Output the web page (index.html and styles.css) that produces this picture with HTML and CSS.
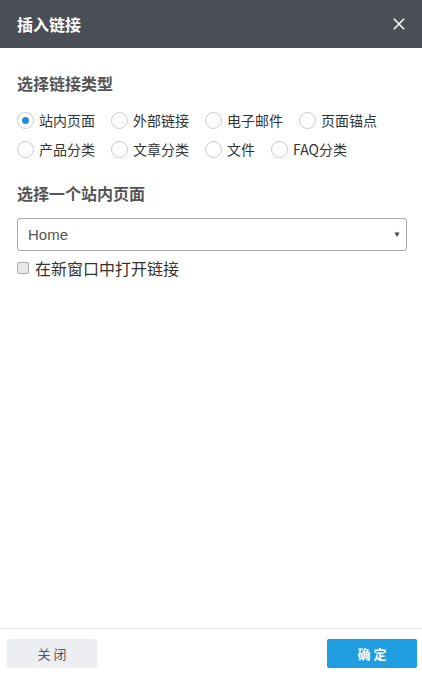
FILE: index.html
```html
<!DOCTYPE html>
<html lang="zh">
<head>
    <meta charset="UTF-8">
    <meta name="viewport" content="width=device-width, initial-scale=1.0">
    <title>插入链接</title>
    <link rel="stylesheet" href="styles.css">
</head>
<body>
    <div class="dialog">
        <div class="dialog-header">
            <div class="dialog-title">插入链接</div>
            <div class="dialog-close">
                <svg width="12" height="12" viewBox="0 0 12 12"><path d="M0.8 0.8 L11.2 11.2 M11.2 0.8 L0.8 11.2" stroke="#fff" stroke-width="1.5" fill="none"/></svg>
            </div>
        </div>

        <div class="dialog-body">
            <div class="section-label">选择链接类型</div>
            <div class="radio-list">
                <label class="radio"><input type="radio" name="type" checked><span>站内页面</span></label>
                <label class="radio"><input type="radio" name="type"><span>外部链接</span></label>
                <label class="radio"><input type="radio" name="type"><span>电子邮件</span></label>
                <label class="radio"><input type="radio" name="type"><span>页面锚点</span></label>
                <label class="radio"><input type="radio" name="type"><span>产品分类</span></label>
                <label class="radio"><input type="radio" name="type"><span>文章分类</span></label>
                <label class="radio"><input type="radio" name="type"><span>文件</span></label>
                <label class="radio"><input type="radio" name="type"><span>FAQ分类</span></label>
            </div>

            <div class="section-label second">选择一个站内页面</div>
            <div class="select">
                <span>Home</span>
                <span class="select-arrow">&#9660;</span>
            </div>
            <label class="check"><input type="checkbox"><span>在新窗口中打开链接</span></label>
        </div>

        <div class="dialog-footer">
            <button class="btn btn-close">关 闭</button>
            <button class="btn btn-ok">确 定</button>
        </div>
    </div>
</body>
</html>
```

FILE: styles.css
```css
* {
    margin: 0;
    padding: 0;
    box-sizing: border-box;
}

body {
    font-family: "Noto Sans CJK SC", "Noto Sans", sans-serif;
    background: #fff;
    color: #333;
}

.dialog {
    height: 677px;
    display: flex;
    flex-direction: column;
}

.dialog-header {
    height: 48px;
    background: #4a4e56;
    display: flex;
    align-items: center;
    justify-content: space-between;
    padding: 0 17px;
}

.dialog-title {
    color: #fff;
    font-size: 16px;
    font-weight: bold;
}

.dialog-close {
    display: flex;
}

.dialog-body {
    flex: 1;
    padding: 24px 15px 0 17px;
}

.section-label {
    font-size: 16px;
    font-weight: bold;
    color: #555;
    line-height: 22px;
}

.section-label.second {
    margin-top: 22px;
}

.radio-list {
    display: flex;
    flex-wrap: wrap;
    column-gap: 16px;
    row-gap: 7px;
    margin-top: 15px;
}

.radio {
    display: flex;
    align-items: center;
    font-size: 14px;
    color: #333;
    height: 22px;
}

.radio input {
    appearance: none;
    width: 17px;
    height: 17px;
    border: 1px solid #ccc;
    border-radius: 50%;
    margin-right: 5px;
    display: grid;
    place-items: center;
    background: #fff;
}

.radio input:checked::after {
    content: "";
    width: 7px;
    height: 7px;
    border-radius: 50%;
    background: #1e8fd8;
}

.select {
    margin-top: 14px;
    height: 33px;
    border: 1px solid #aaa;
    border-radius: 3px;
    display: flex;
    align-items: center;
    justify-content: space-between;
    padding: 0 5px 0 10px;
    font-family: "Liberation Sans", sans-serif;
    font-size: 15px;
    color: #555;
}

.select-arrow {
    font-size: 8px;
    color: #444;
}

.check {
    display: flex;
    align-items: center;
    margin-top: 5px;
    font-size: 16px;
    color: #333;
}

.check input {
    appearance: none;
    width: 12px;
    height: 12px;
    border: 1px solid #aaa;
    border-radius: 2px;
    background: #e8e8e8;
    margin-right: 6px;
}

.dialog-footer {
    border-top: 1px solid #e5e5e5;
    height: 49px;
    display: flex;
    justify-content: space-between;
    padding: 10px 5px 0 7px;
}

.btn {
    width: 90px;
    height: 29px;
    border: none;
    border-radius: 2px;
    font-family: inherit;
    font-size: 13px;
}

.btn-close {
    background: #eceef1;
    color: #555;
}

.btn-ok {
    background: #1e9ee0;
    color: #fff;
    font-weight: bold;
}
```
